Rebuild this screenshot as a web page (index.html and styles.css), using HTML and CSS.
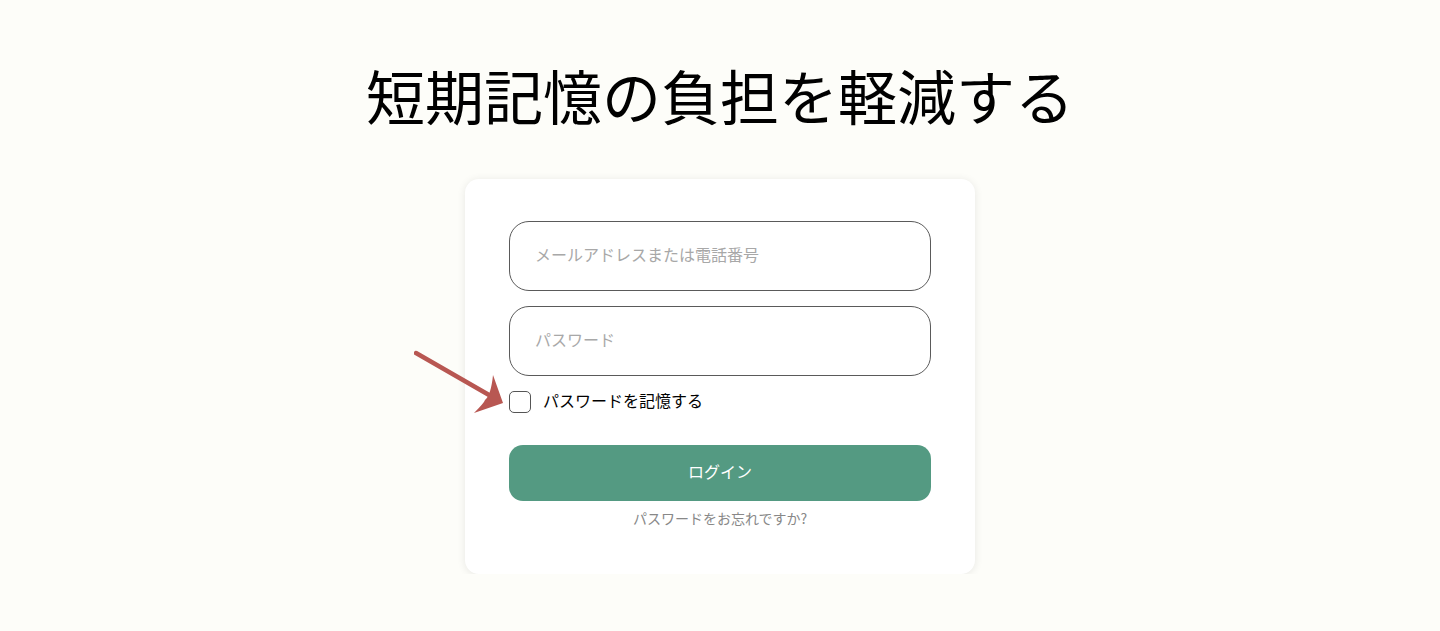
FILE: index.html
```html
<!DOCTYPE html>
<html lang="ja">
<head>
    <meta charset="UTF-8">
    <meta name="viewport" content="width=device-width, initial-scale=1.0">
    <title>短期記憶の負担を軽減する</title>
    <link rel="stylesheet" href="styles.css">
</head>
<body>
    <div class="page">
        <h1 class="title">短期記憶の負担を軽減する</h1>

        <div class="card">
            <input class="field" type="text" placeholder="メールアドレスまたは電話番号">
            <input class="field" type="password" placeholder="パスワード">

            <label class="remember">
                <span class="box"></span>
                <span class="remember-text">パスワードを記憶する</span>
                <svg class="arrow" width="96" height="64" viewBox="0 0 96 64">
                    <line x1="2" y1="3" x2="82" y2="49" stroke="#b85752" stroke-width="4.5" stroke-linecap="round"/>
                    <path d="M89 53 L60 63 Q70 53 71 50 Q77 45 79 25 Z" fill="#b85752"/>
                </svg>
            </label>

            <button class="login-btn">ログイン</button>
            <a class="forgot" href="#">パスワードをお忘れですか?</a>
        </div>
    </div>
</body>
</html>
```

FILE: styles.css
```css
body {
    margin: 0;
    background-color: #fdfdf9;
    font-family: "Noto Sans CJK JP", "Noto Sans", sans-serif;
    color: #000;
}
.page {
    display: flex;
    flex-direction: column;
    align-items: center;
    padding-top: 51px;
}
.title {
    margin: 0;
    font-size: 59px;
    font-weight: 400;
    line-height: 88px;
}
.card {
    margin-top: 40px;
    width: 510px;
    box-sizing: border-box;
    padding: 42px 44px 46px;
    background-color: #fff;
    border-radius: 14px;
    box-shadow: 0 1px 8px rgba(0,0,0,0.09);
    display: flex;
    flex-direction: column;
}
.field {
    height: 70px;
    box-sizing: border-box;
    border: 1px solid #5a5a5a;
    border-radius: 20px;
    padding: 0 25px 4px;
    font-family: inherit;
    font-size: 16px;
    color: #333;
    margin-bottom: 15px;
    outline: none;
}
.field::placeholder {
    color: #a8a8a8;
}
.remember {
    position: relative;
    display: flex;
    align-items: center;
    gap: 12px;
    font-size: 16px;
    height: 22px;
}
.remember-text {
    margin-bottom: 4px;
}
.box {
    width: 22px;
    height: 22px;
    box-sizing: border-box;
    border: 1px solid #555;
    border-radius: 5px;
}
.arrow {
    position: absolute;
    left: -95px;
    top: -41px;
}
.login-btn {
    margin-top: 32px;
    height: 56px;
    padding-bottom: 5px;
    border: none;
    border-radius: 14px;
    background-color: #549a82;
    color: #fff;
    font-family: inherit;
    font-size: 16px;
    cursor: pointer;
}
.forgot {
    margin-top: 7px;
    text-align: center;
    font-size: 14px;
    color: #888;
    text-decoration: none;
    line-height: 20px;
}
```
